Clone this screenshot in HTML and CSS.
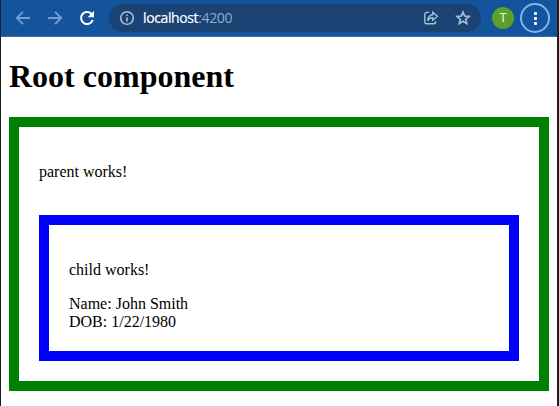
FILE: index.html
```html
<!DOCTYPE html>
<html lang="en">
<head>
<meta charset="utf-8">
<title>Root component</title>
<link rel="stylesheet" href="styles.css">
</head>
<body>
<div class="window">
  <header class="toolbar">
    <svg class="nav back" viewBox="0 0 16 16"><path d="M15 8H2M8 1.8L1.8 8L8 14.2"/></svg>
    <svg class="nav forward" viewBox="0 0 16 16"><path d="M1 8H14M8 1.8L14.2 8L8 14.2"/></svg>
    <svg class="nav reload" viewBox="0 0 16 16"><path d="M13.7 10A6 6 0 1 1 12.3 3.8L13.4 5"/><path class="tip" d="M15 0.8V7.2H8.6z"/></svg>
    <div class="address">
      <svg class="info" viewBox="0 0 16 16"><circle cx="8" cy="8" r="6.3"/><path d="M8 7.2V11.5M8 4.4V6"/></svg>
      <span class="url">localhost<span class="port">:4200</span></span>
      <svg class="share" viewBox="0 0 16 16"><path d="M6 2.4H3.6Q1.8 2.4 1.8 4.2V12Q1.8 13.8 3.6 13.8H10.8Q12.6 13.8 12.6 12V11.2"/><path d="M4.6 10.6C5 7.2 6.8 5 9.8 4.7V2.2L14.4 6.3L9.8 10.3V7.8C7.4 7.8 5.8 8.8 4.6 10.6z"/></svg>
      <svg class="star" viewBox="0 0 16 16"><path d="M8 2L9.7 6.1L14.1 6.4L10.7 9.3L11.8 13.6L8 11.2L4.2 13.6L5.3 9.3L1.9 6.4L6.3 6.1z"/></svg>
    </div>
    <span class="avatar">T</span>
    <span class="menu"><i></i><i></i><i></i></span>
  </header>
  <main>
    <h1>Root component</h1>
    <section class="box parent">
      <p>parent works!</p>
      <br>
      <section class="box child">
        <p>child works!</p>
        <div>Name: John Smith</div>
        <div>DOB: 1/22/1980</div>
      </section>
    </section>
  </main>
</div>
</body>
</html>
```
FILE: styles.css
```css
* { box-sizing: border-box; }
body {
  margin: 0;
  background: #201d20;
  overflow: hidden;
}
.window {
  height: 406px;
  margin: 0 2px 0 1px;
  background: #fff;
  color: #000;
  font: 16px/18px "Liberation Serif", serif;
}
.toolbar {
  display: flex;
  align-items: center;
  height: 37px;
  padding-left: 14px;
  background: #14549c;
  border-bottom: 1px solid #39699f;
}
svg {
  flex: none;
  width: 16px;
  height: 16px;
  fill: none;
  stroke: #a9bed6;
  stroke-width: 1.4;
}
.nav { stroke-width: 1.9; }
.back, .forward { stroke: #769dce; }
.forward { margin-left: 16px; }
.reload { margin-left: 16px; stroke: #fff; stroke-width: 2.1; }
.tip { fill: #fff; stroke: none; }
.address {
  display: flex;
  align-items: center;
  width: 372px;
  height: 28px;
  margin-left: 14px;
  padding: 0 10px;
  border-radius: 14px;
  background: #1a4374;
}
.info { stroke-width: 1.6; }
.url {
  flex: 1;
  margin-left: 8px;
  color: #fff;
  font: 14px/20px "Open Sans", sans-serif;
  letter-spacing: -0.38px;
  -webkit-text-stroke: 0.2px;
}
.port { color: #94adca; -webkit-text-stroke: 0; }
.star { margin-left: 16px; stroke-width: 1.6; }
.avatar {
  width: 22px;
  height: 22px;
  margin-left: 11px;
  border-radius: 50%;
  background: #5ca02b;
  color: #f0f7e8;
  font: 12px/22px Roboto, sans-serif;
  text-align: center;
}
.menu {
  display: flex;
  flex-direction: column;
  align-items: center;
  justify-content: center;
  gap: 2px;
  width: 30px;
  height: 30px;
  margin-left: 6px;
  border: 2px solid #83b0f5;
  border-radius: 50%;
}
.menu i {
  width: 3px;
  height: 3px;
  border-radius: 1px;
  background: #fff;
}
main {
  display: flow-root;
  padding: 0 8px;
}
h1 {
  margin: 21px 0 22px;
  font-size: 32px;
  line-height: 37px;
}
.box {
  padding: 20px;
  border: 10px solid;
}
.parent { border-color: #008000; }
.child { border-color: #00f; }
.box > p { margin: 16px 0; }
.box > br { line-height: 18px; }
.box > div { height: 18px; }
```
